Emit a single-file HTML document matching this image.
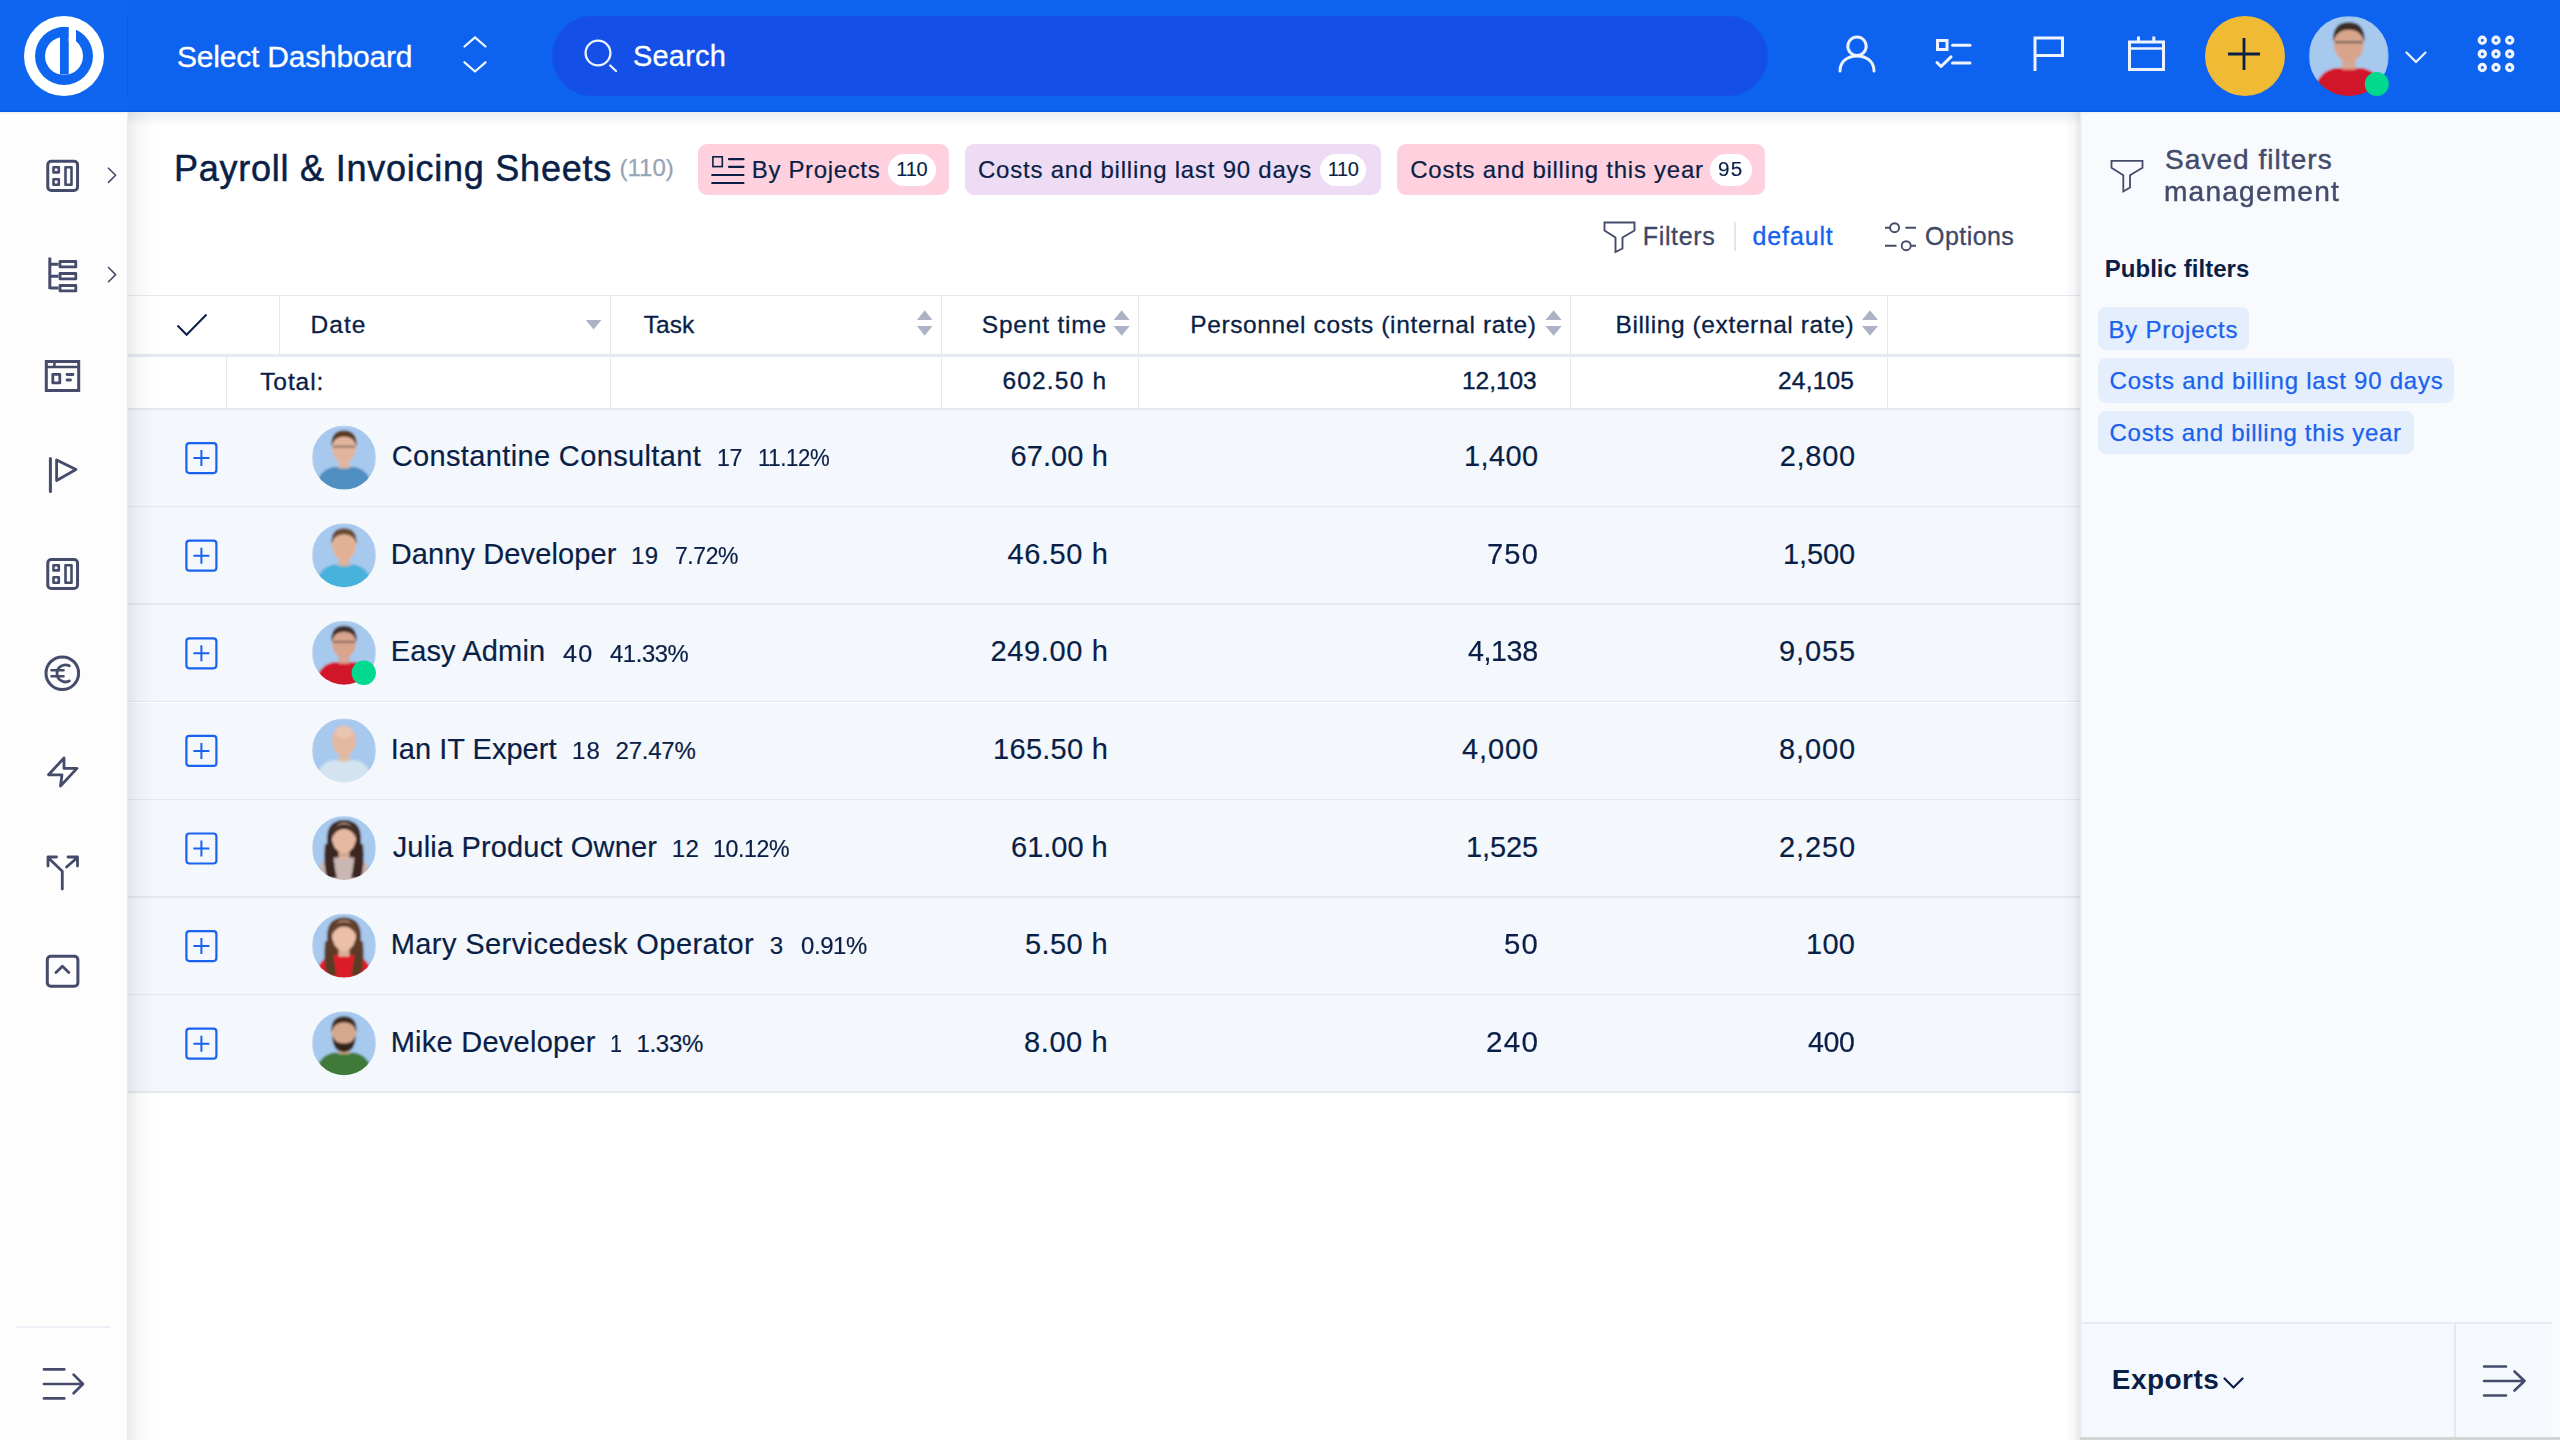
<!DOCTYPE html>
<html><head><meta charset="utf-8"><title>Payroll &amp; Invoicing Sheets</title>
<style>
*{margin:0;padding:0;box-sizing:border-box}
html,body{width:2560px;height:1440px;overflow:hidden;background:#fff;font-family:"Liberation Sans",sans-serif;color:#0a1f47}
.a{position:absolute}
.t{position:absolute;white-space:nowrap;line-height:1}
svg{position:absolute;overflow:visible}
</style></head>
<body>
<svg width="0" height="0" style="position:absolute"><defs><filter id="blur" x="-10%" y="-10%" width="120%" height="120%"><feGaussianBlur stdDeviation="0.8"/></filter></defs></svg>
<div class="a" style="left:0;top:0;width:2560px;height:112px;background:#0e66f0"></div>
<div class="a" style="left:128px;top:0;width:2432px;height:112px;background:#0d63ef"></div>
<div class="a" style="left:0;top:110px;width:2560px;height:2px;background:linear-gradient(#0c5eee,#0557e8)"></div>
<div class="a" style="left:128px;top:112px;width:1952px;height:14px;background:linear-gradient(#ebedf1,rgba(255,255,255,0))"></div>
<div class="a" style="left:0;top:112px;width:127px;height:1328px;background:#fdfdfe"></div>
<div class="a" style="left:127px;top:112px;width:1px;height:1328px;background:#e6eaf2"></div>
<div class="a" style="left:0;top:112px;width:128px;height:3px;background:linear-gradient(#eceef2,rgba(255,255,255,0))"></div>
<div class="a" style="left:2080px;top:112px;width:480px;height:1328px;background:#f9fafe"></div>
<div class="a" style="left:2080px;top:112px;width:2px;height:1328px;background:linear-gradient(90deg,#e6e9f3,#f3f5fc)"></div>
<div class="a" style="left:2080px;top:112px;width:480px;height:3px;background:linear-gradient(#eceef3,rgba(249,250,254,0))"></div>
<svg style="left:0;top:0" width="128" height="112" viewBox="0 0 128 112">
<circle cx="64" cy="56" r="40" fill="#fff"/>
<circle cx="64" cy="56" r="29" fill="#0e66f0"/>
<circle cx="64" cy="56" r="19" fill="#fff"/>
<rect x="60" y="27" width="8.75" height="47.5" fill="#0e66f0"/>
<rect x="68.75" y="20" width="7.25" height="22" fill="#fff"/>
</svg>
<div class="a" style="left:127px;top:16px;width:1px;height:80px;background:#1a55e0"></div>
<div class="t" style="left:177.00px;top:41.60px;font-size:30px;color:#fff;font-weight:400;letter-spacing:-0.200px;-webkit-text-stroke:0.3px #fff;">Select Dashboard</div>
<svg style="left:0;top:0" width="600" height="112">
<path d="M464.5 46.5 L475 37.3 L485.5 46.5 M464.5 62.3 L475 71.5 L485.5 62.3" fill="none" stroke="#eef3fd" stroke-width="2.3" stroke-linecap="round" stroke-linejoin="round"/>
</svg>
<div class="a" style="left:552px;top:16px;width:1216px;height:80px;border-radius:40px;background:#1450e8"></div>
<svg style="left:0;top:0" width="700" height="112">
<circle cx="598" cy="53" r="12.4" fill="none" stroke="#eef3fd" stroke-width="2.3"/>
<path d="M610.2 65.5 L616 71" stroke="#eef3fd" stroke-width="2.3" stroke-linecap="round"/>
</svg>
<div class="t" style="left:633.00px;top:42.45px;font-size:29px;color:#fff;font-weight:400;letter-spacing:0.200px;-webkit-text-stroke:0.3px #fff;">Search</div>
<svg style="left:0;top:0" width="2560" height="112">
<g fill="none" stroke="#eef3fd" stroke-width="3" stroke-linecap="round" stroke-linejoin="round">
<circle cx="1857" cy="46.3" r="9.2"/>
<path d="M1840 71 C1840 61.5 1847.5 56 1857 56 C1866.5 56 1874 61.5 1874 71"/>
<rect x="1937.5" y="40.5" width="9.5" height="9" stroke-linecap="butt" stroke-linejoin="miter"/>
<path d="M1952.5 45.3 H1970"/>
<path d="M1937 62.5 L1941 66.5 L1951 56.8"/>
<path d="M1952.5 63 H1970"/>
<path d="M2035 71 V38 H2062.5 V55.5 H2035" stroke-linecap="butt" stroke-linejoin="miter"/>
<rect x="2129.5" y="42" width="34" height="27.5" stroke-linejoin="miter"/>
<path d="M2129.5 48.5 H2163.5" stroke-width="2.6"/>
<path d="M2138.5 36.5 V42 M2153.8 36.5 V42" stroke-linecap="butt"/>
</g>
<circle cx="2245" cy="56" r="40" fill="#f1ba35"/>
<path d="M2228 54 H2260 M2244 38 V70" stroke="#0a1f47" stroke-width="2.8"/>
<path d="M2406.5 52.5 L2416 62 L2425.5 52.5" fill="none" stroke="#eef3fd" stroke-width="2.2" stroke-linecap="round" stroke-linejoin="round"/>
<g fill="none" stroke="#eef3fd" stroke-width="3.2">
<circle cx="2482.3" cy="40.3" r="3.1"/><circle cx="2496" cy="40.3" r="3.1"/><circle cx="2509.7" cy="40.3" r="3.1"/>
<circle cx="2482.3" cy="53.9" r="3.1"/><circle cx="2496" cy="53.9" r="3.1"/><circle cx="2509.7" cy="53.9" r="3.1"/>
<circle cx="2482.3" cy="67.5" r="3.1"/><circle cx="2496" cy="67.5" r="3.1"/><circle cx="2509.7" cy="67.5" r="3.1"/>
</g>
</svg>
<svg style="left:0;top:0" width="2560" height="112"><g transform="translate(2308.80 16.00) scale(1.2500)"><clipPath id="c23488_560"><circle cx="32" cy="32" r="32"/></clipPath><g clip-path="url(#c23488_560)" filter="url(#blur)"><rect width="64" height="64" fill="#a7c9ee"/><path d="M3 66 Q5 45 21 41.5 L43 41.5 Q59 45 61 66 Z" fill="#d2162b"/><rect x="26.5" y="30" width="11" height="13" fill="#d9a48c" opacity="0.9"/><ellipse cx="32" cy="22" rx="12" ry="15" fill="#d9a48c"/><path d="M19.5 21 Q18.5 5 32 5 Q45.5 5 44.5 21 Q42 11 32 11 Q22 11 19.5 21 Z" fill="#3b2d26"/><path d="M21 21 H43" stroke="#3a3a3a" stroke-width="1.6" opacity="0.7"/></g></g><circle cx="2376.8" cy="84" r="12" fill="#00d98e"/></svg>
<svg style="left:0;top:0" width="128" height="1440">
<g fill="none" stroke="#454c6b" stroke-width="3" stroke-linecap="round" stroke-linejoin="round">
<rect x="47.75" y="161.3" width="29.8" height="29.2" rx="3.5"/>
<rect x="53.5" y="167.3" width="5.3" height="5.1" stroke-width="2.6"/>
<rect x="53.5" y="179.3" width="5.3" height="5.4" stroke-width="2.6"/>
<rect x="65.5" y="167.3" width="6" height="17.4" stroke-width="2.6"/>
<path d="M108.5 168.2 L115.6 175.3 L108.5 182.4" stroke-width="1.6"/>

<path d="M49.8 257.5 V289" stroke-linecap="butt"/>
<path d="M49.8 264.2 H58.5 M49.8 276.2 H58.5 M49.8 288 H58.5" stroke-linecap="butt"/>
<rect x="60" y="261.5" width="15.8" height="5.4" stroke-width="2.8"/>
<rect x="60" y="273.5" width="15.8" height="5.4" stroke-width="2.8"/>
<rect x="60" y="285.5" width="15.8" height="5.4" stroke-width="2.8"/>
<path d="M108.5 267.5 L115.6 274.6 L108.5 281.7" stroke-width="1.6"/>

<rect x="46.3" y="361.5" width="32.4" height="29" stroke-linejoin="miter"/>
<path d="M46.3 367 H78.7 M54.4 361.5 V367" stroke-width="2.6"/>
<rect x="52.8" y="374.3" width="7" height="8.6" stroke-width="2.8"/>
<path d="M67 374.5 H73 M67 380 H70.5" stroke-width="2.8"/>

<path d="M50.4 458.5 V491.5"/>
<path d="M56.6 460 L76 469.5 L56.6 480.5 Z" stroke-width="2.8"/>

<rect x="47.75" y="559.5" width="29.8" height="29" rx="3.5"/>
<rect x="53.5" y="565.3" width="5.3" height="5.1" stroke-width="2.6"/>
<rect x="53.5" y="577.3" width="5.3" height="5.4" stroke-width="2.6"/>
<rect x="65.5" y="565.3" width="6" height="17.4" stroke-width="2.6"/>

<circle cx="62.3" cy="673.2" r="16.3"/>
<path d="M69.3 665.8 A8.5 8.5 0 1 0 69.3 681" stroke-width="2.8"/>
<path d="M51.5 670.3 H63.5 M51.5 676.3 H63.5" stroke-width="2.6"/>

<path d="M64 758 L48.5 774.8 H62 L60.5 786 L77 768.4 H64 Z" stroke-width="2.8"/>

<path d="M62.3 889 V871.2 L48 857.5 M48 866 V857 H56.5 M66.5 867 L77.5 857.5 M68 857 H77.5 V866" stroke-width="2.8"/>

<rect x="47.3" y="956.3" width="30.6" height="30" rx="3.5"/>
<path d="M56 972.5 L62.4 966.2 L68.8 972.5" stroke-width="2.8"/>

<path d="M44 1369.4 H64.3 M44 1384 H82.5 M44 1398.4 H64.3 M73.6 1374.6 L83 1384 L73.6 1393.2" stroke-width="2.7"/>
</g>
<rect x="16" y="1326.5" width="94.5" height="1.2" fill="#e3e8f2"/>
</svg>
<div class="t" style="left:174.00px;top:150.53px;font-size:36px;color:#0a1f47;font-weight:400;letter-spacing:0.760px;-webkit-text-stroke:0.5px #0a1f47;">Payroll &amp; Invoicing Sheets</div>
<div class="t" style="left:619.50px;top:155.68px;font-size:24px;color:#97a3b6;font-weight:400;letter-spacing:0.000px;-webkit-text-stroke:0.25px #97a3b6;">(110)</div>
<div class="a" style="left:697.6px;top:144px;width:251.39999999999998px;height:51px;border-radius:9px;background:#ffd1df"></div>
<div class="a" style="left:888.3px;top:154px;width:47.5px;height:32px;border-radius:16px;background:#fff"></div>
<div class="t" style="left:751.80px;top:157.68px;font-size:24px;color:#0a1f47;font-weight:400;letter-spacing:0.650px;-webkit-text-stroke:0.2px #0a1f47;">By Projects</div>
<div class="t" style="left:896.30px;top:158.97px;font-size:20px;color:#0a1f47;font-weight:400;letter-spacing:-0.250px;-webkit-text-stroke:0.15px #0a1f47;">110</div>
<svg style="left:0;top:0" width="1000" height="220"><g fill="none" stroke="#0a1f47" stroke-width="2.2">
<rect x="712.9" y="156.8" width="9.4" height="9.8" stroke-width="1.6"/>
<path d="M729 159.2 H743.5 M729 166.8 H743.5 M712.2 175 H743.5 M712.2 183 H743.5" stroke-linecap="round"/>
</g></svg>
<div class="a" style="left:965px;top:144px;width:416px;height:51px;border-radius:9px;background:#eedcf4"></div>
<div class="a" style="left:1320px;top:154px;width:46px;height:32px;border-radius:16px;background:#fff"></div>
<div class="t" style="left:978.00px;top:157.68px;font-size:24px;color:#0a1f47;font-weight:400;letter-spacing:0.776px;-webkit-text-stroke:0.2px #0a1f47;">Costs and billing last 90 days</div>
<div class="t" style="left:1327.75px;top:158.97px;font-size:20px;color:#0a1f47;font-weight:400;letter-spacing:-0.375px;-webkit-text-stroke:0.15px #0a1f47;">110</div>
<div class="a" style="left:1397px;top:144px;width:368px;height:51px;border-radius:9px;background:#ffd1df"></div>
<div class="a" style="left:1710px;top:154px;width:42px;height:32px;border-radius:16px;background:#fff"></div>
<div class="t" style="left:1410.25px;top:157.68px;font-size:24px;color:#0a1f47;font-weight:400;letter-spacing:0.740px;-webkit-text-stroke:0.2px #0a1f47;">Costs and billing this year</div>
<div class="t" style="left:1718.46px;top:158.97px;font-size:20px;color:#0a1f47;font-weight:400;letter-spacing:1.200px;-webkit-text-stroke:0.15px #0a1f47;transform:scaleX(1.0360);transform-origin:0 0;">95</div>
<svg style="left:0;top:0" width="2100" height="300"><g fill="none" stroke="#454c6b" stroke-width="1.9" stroke-linejoin="miter">
<path d="M1604.5 222.5 H1634.5 V230.5 L1622.5 237.5 V248.5 L1615.5 252 V237.5 L1604.5 230.5 Z"/>
<circle cx="1894.6" cy="227.7" r="4.5"/><circle cx="1906.2" cy="245.7" r="4.5"/>
<path d="M1885 227.7 H1890 M1905.4 227.7 H1916 M1885 245.7 H1896.5 M1911 245.7 H1916"/>
</g></svg>
<div class="t" style="left:1642.70px;top:223.84px;font-size:25px;color:#3e4766;font-weight:400;letter-spacing:0.683px;-webkit-text-stroke:0.3px #3e4766;">Filters</div>
<div class="a" style="left:1733.5px;top:222px;width:2.5px;height:28.5px;background:#e3e7ee"></div>
<div class="t" style="left:1752.60px;top:223.84px;font-size:25px;color:#1661f0;font-weight:400;letter-spacing:0.850px;-webkit-text-stroke:0.3px #1661f0;">default</div>
<div class="t" style="left:1925.00px;top:223.84px;font-size:25px;color:#3e4766;font-weight:400;letter-spacing:0.450px;-webkit-text-stroke:0.3px #3e4766;">Options</div>
<div class="a" style="left:128px;top:295px;width:1952px;height:1px;background:#e3e8f1"></div>
<div class="a" style="left:128px;top:354px;width:1952px;height:3px;background:#e4e9f3"></div>
<div class="a" style="left:128px;top:408px;width:1952px;height:2px;background:#e3e8f1"></div>
<div class="a" style="left:279px;top:296px;width:1px;height:58px;background:#e3e8f1"></div>
<div class="a" style="left:610px;top:296px;width:1px;height:58px;background:#e3e8f1"></div>
<div class="a" style="left:941px;top:296px;width:1px;height:58px;background:#e3e8f1"></div>
<div class="a" style="left:1138px;top:296px;width:1px;height:58px;background:#e3e8f1"></div>
<div class="a" style="left:1570px;top:296px;width:1px;height:58px;background:#e3e8f1"></div>
<div class="a" style="left:1887px;top:296px;width:1px;height:58px;background:#e3e8f1"></div>
<div class="a" style="left:226px;top:357px;width:1px;height:51px;background:#e3e8f1"></div>
<div class="a" style="left:610px;top:357px;width:1px;height:51px;background:#e3e8f1"></div>
<div class="a" style="left:941px;top:357px;width:1px;height:51px;background:#e3e8f1"></div>
<div class="a" style="left:1138px;top:357px;width:1px;height:51px;background:#e3e8f1"></div>
<div class="a" style="left:1570px;top:357px;width:1px;height:51px;background:#e3e8f1"></div>
<div class="a" style="left:1887px;top:357px;width:1px;height:51px;background:#e3e8f1"></div>
<div class="t" style="left:310.60px;top:313.46px;font-size:24.5px;color:#0a1f47;font-weight:400;letter-spacing:1.000px;-webkit-text-stroke:0.3px #0a1f47;">Date</div>
<div class="t" style="left:643.75px;top:313.46px;font-size:24.5px;color:#0a1f47;font-weight:400;letter-spacing:0.000px;-webkit-text-stroke:0.3px #0a1f47;">Task</div>
<div class="t" style="left:981.80px;top:313.46px;font-size:24.5px;color:#0a1f47;font-weight:400;letter-spacing:0.800px;-webkit-text-stroke:0.3px #0a1f47;">Spent time</div>
<div class="t" style="left:1190.20px;top:313.46px;font-size:24.5px;color:#0a1f47;font-weight:400;letter-spacing:0.627px;-webkit-text-stroke:0.3px #0a1f47;">Personnel costs (internal rate)</div>
<div class="t" style="left:1615.50px;top:313.46px;font-size:24.5px;color:#0a1f47;font-weight:400;letter-spacing:0.614px;-webkit-text-stroke:0.3px #0a1f47;">Billing (external rate)</div>
<svg style="left:0;top:0" width="2100" height="400">
<path d="M177.5 325.5 L186.6 334.8 L206.5 314.5" fill="none" stroke="#0a1f47" stroke-width="2"/>
<g fill="#abb3c4">
<path d="M585.8 320 H601.4 L593.6 329.5 Z"/>
<path d="M916.9 320 H932.5 L924.7 310.3 Z M916.9 326 H932.5 L924.7 335.8 Z"/>
<path d="M1113.6 320 H1129.7 L1121.65 310.3 Z M1113.6 326 H1129.7 L1121.65 335.8 Z"/>
<path d="M1545.5 320 H1561.7 L1553.6 310.3 Z M1545.5 326 H1561.7 L1553.6 335.8 Z"/>
<path d="M1862 320 H1878 L1870 310.3 Z M1862 326 H1878 L1870 335.8 Z"/>
</g></svg>
<div class="t" style="left:260.20px;top:369.56px;font-size:24.5px;color:#0a1f47;font-weight:400;letter-spacing:0.910px;-webkit-text-stroke:0.35px #0a1f47;">Total:</div>
<div class="t" style="left:1002.40px;top:369.26px;font-size:24.5px;color:#0a1f47;font-weight:400;letter-spacing:1.186px;-webkit-text-stroke:0.35px #0a1f47;">602.50 h</div>
<div class="t" style="left:1462.00px;top:369.26px;font-size:24.5px;color:#0a1f47;font-weight:400;letter-spacing:-0.050px;-webkit-text-stroke:0.35px #0a1f47;">12,103</div>
<div class="t" style="left:1778.00px;top:369.26px;font-size:24.5px;color:#0a1f47;font-weight:400;letter-spacing:0.200px;-webkit-text-stroke:0.35px #0a1f47;">24,105</div>
<div class="a" style="left:128px;top:409.70px;width:1952px;height:97.60px;background:#f4f8fd"></div>
<div class="a" style="left:128px;top:505.70px;width:1952px;height:1.6px;background:#e3e8f1"></div>
<div class="t" style="left:391.70px;top:442.25px;font-size:29px;color:#0a1f47;font-weight:400;letter-spacing:0.362px;-webkit-text-stroke:0.2px #0a1f47;">Constantine Consultant</div>
<div class="t" style="left:716.97px;top:446.48px;font-size:24px;color:#0a1f47;font-weight:400;letter-spacing:-0.400px;-webkit-text-stroke:0.2px #0a1f47;transform:scaleX(0.9661);transform-origin:0 0;">17</div>
<div class="t" style="left:758.05px;top:446.48px;font-size:24px;color:#0a1f47;font-weight:400;letter-spacing:-0.400px;-webkit-text-stroke:0.2px #0a1f47;transform:scaleX(0.9240);transform-origin:0 0;">11.12%</div>
<div class="t" style="left:1010.50px;top:442.25px;font-size:29px;color:#0a1f47;font-weight:400;letter-spacing:0.083px;-webkit-text-stroke:0.2px #0a1f47;">67.00 h</div>
<div class="t" style="left:1464.00px;top:442.25px;font-size:29px;color:#0a1f47;font-weight:400;letter-spacing:0.375px;-webkit-text-stroke:0.2px #0a1f47;">1,400</div>
<div class="t" style="left:1779.75px;top:442.25px;font-size:29px;color:#0a1f47;font-weight:400;letter-spacing:0.688px;-webkit-text-stroke:0.2px #0a1f47;">2,800</div>
<div class="a" style="left:128px;top:507.30px;width:1952px;height:97.60px;background:#f4f8fd"></div>
<div class="a" style="left:128px;top:603.30px;width:1952px;height:1.6px;background:#e3e8f1"></div>
<div class="t" style="left:390.70px;top:539.85px;font-size:29px;color:#0a1f47;font-weight:400;letter-spacing:0.114px;-webkit-text-stroke:0.2px #0a1f47;">Danny Developer</div>
<div class="t" style="left:630.90px;top:544.08px;font-size:24px;color:#0a1f47;font-weight:400;letter-spacing:0.400px;-webkit-text-stroke:0.2px #0a1f47;">19</div>
<div class="t" style="left:674.94px;top:544.08px;font-size:24px;color:#0a1f47;font-weight:400;letter-spacing:-0.400px;-webkit-text-stroke:0.2px #0a1f47;transform:scaleX(0.9557);transform-origin:0 0;">7.72%</div>
<div class="t" style="left:1007.50px;top:539.85px;font-size:29px;color:#0a1f47;font-weight:400;letter-spacing:0.583px;-webkit-text-stroke:0.2px #0a1f47;">46.50 h</div>
<div class="t" style="left:1487.00px;top:539.85px;font-size:29px;color:#0a1f47;font-weight:400;letter-spacing:1.200px;-webkit-text-stroke:0.2px #0a1f47;transform:scaleX(1.0020);transform-origin:0 0;">750</div>
<div class="t" style="left:1783.00px;top:539.85px;font-size:29px;color:#0a1f47;font-weight:400;letter-spacing:-0.125px;-webkit-text-stroke:0.2px #0a1f47;">1,500</div>
<div class="a" style="left:128px;top:604.90px;width:1952px;height:97.60px;background:#f4f8fd"></div>
<div class="a" style="left:128px;top:700.90px;width:1952px;height:1.6px;background:#e3e8f1"></div>
<div class="t" style="left:390.70px;top:637.45px;font-size:29px;color:#0a1f47;font-weight:400;letter-spacing:0.144px;-webkit-text-stroke:0.2px #0a1f47;">Easy Admin</div>
<div class="t" style="left:562.60px;top:641.68px;font-size:24px;color:#0a1f47;font-weight:400;letter-spacing:1.200px;-webkit-text-stroke:0.2px #0a1f47;transform:scaleX(1.0515);transform-origin:0 0;">40</div>
<div class="t" style="left:609.70px;top:641.68px;font-size:24px;color:#0a1f47;font-weight:400;letter-spacing:-0.400px;-webkit-text-stroke:0.2px #0a1f47;transform:scaleX(0.9924);transform-origin:0 0;">41.33%</div>
<div class="t" style="left:990.50px;top:637.45px;font-size:29px;color:#0a1f47;font-weight:400;letter-spacing:0.643px;-webkit-text-stroke:0.2px #0a1f47;">249.00 h</div>
<div class="t" style="left:1468.00px;top:637.45px;font-size:29px;color:#0a1f47;font-weight:400;letter-spacing:-0.400px;-webkit-text-stroke:0.2px #0a1f47;transform:scaleX(0.9872);transform-origin:0 0;">4,138</div>
<div class="t" style="left:1779.00px;top:637.45px;font-size:29px;color:#0a1f47;font-weight:400;letter-spacing:0.875px;-webkit-text-stroke:0.2px #0a1f47;">9,055</div>
<div class="a" style="left:128px;top:702.50px;width:1952px;height:97.60px;background:#f4f8fd"></div>
<div class="a" style="left:128px;top:798.50px;width:1952px;height:1.6px;background:#e3e8f1"></div>
<div class="t" style="left:390.70px;top:735.05px;font-size:29px;color:#0a1f47;font-weight:400;letter-spacing:0.025px;-webkit-text-stroke:0.2px #0a1f47;">Ian IT Expert</div>
<div class="t" style="left:571.89px;top:739.28px;font-size:24px;color:#0a1f47;font-weight:400;letter-spacing:1.200px;-webkit-text-stroke:0.2px #0a1f47;transform:scaleX(1.0040);transform-origin:0 0;">18</div>
<div class="t" style="left:615.60px;top:739.28px;font-size:24px;color:#0a1f47;font-weight:400;letter-spacing:-0.240px;-webkit-text-stroke:0.2px #0a1f47;">27.47%</div>
<div class="t" style="left:993.10px;top:735.05px;font-size:29px;color:#0a1f47;font-weight:400;letter-spacing:0.271px;-webkit-text-stroke:0.2px #0a1f47;">165.50 h</div>
<div class="t" style="left:1462.00px;top:735.05px;font-size:29px;color:#0a1f47;font-weight:400;letter-spacing:0.875px;-webkit-text-stroke:0.2px #0a1f47;">4,000</div>
<div class="t" style="left:1779.00px;top:735.05px;font-size:29px;color:#0a1f47;font-weight:400;letter-spacing:0.875px;-webkit-text-stroke:0.2px #0a1f47;">8,000</div>
<div class="a" style="left:128px;top:800.10px;width:1952px;height:97.60px;background:#f4f8fd"></div>
<div class="a" style="left:128px;top:896.10px;width:1952px;height:1.6px;background:#e3e8f1"></div>
<div class="t" style="left:392.70px;top:832.65px;font-size:29px;color:#0a1f47;font-weight:400;letter-spacing:0.172px;-webkit-text-stroke:0.2px #0a1f47;">Julia Product Owner</div>
<div class="t" style="left:671.70px;top:836.88px;font-size:24px;color:#0a1f47;font-weight:400;letter-spacing:0.500px;-webkit-text-stroke:0.2px #0a1f47;">12</div>
<div class="t" style="left:713.37px;top:836.88px;font-size:24px;color:#0a1f47;font-weight:400;letter-spacing:-0.400px;-webkit-text-stroke:0.2px #0a1f47;transform:scaleX(0.9649);transform-origin:0 0;">10.12%</div>
<div class="t" style="left:1011.10px;top:832.65px;font-size:29px;color:#0a1f47;font-weight:400;letter-spacing:-0.017px;-webkit-text-stroke:0.2px #0a1f47;">61.00 h</div>
<div class="t" style="left:1466.00px;top:832.65px;font-size:29px;color:#0a1f47;font-weight:400;letter-spacing:-0.125px;-webkit-text-stroke:0.2px #0a1f47;">1,525</div>
<div class="t" style="left:1779.00px;top:832.65px;font-size:29px;color:#0a1f47;font-weight:400;letter-spacing:0.875px;-webkit-text-stroke:0.2px #0a1f47;">2,250</div>
<div class="a" style="left:128px;top:897.70px;width:1952px;height:97.60px;background:#f4f8fd"></div>
<div class="a" style="left:128px;top:993.70px;width:1952px;height:1.6px;background:#e3e8f1"></div>
<div class="t" style="left:390.70px;top:930.25px;font-size:29px;color:#0a1f47;font-weight:400;letter-spacing:0.421px;-webkit-text-stroke:0.2px #0a1f47;">Mary Servicedesk Operator</div>
<div class="t" style="left:769.70px;top:934.48px;font-size:24px;color:#0a1f47;font-weight:400;letter-spacing:0.700px;-webkit-text-stroke:0.2px #0a1f47;">3</div>
<div class="t" style="left:800.70px;top:934.48px;font-size:24px;color:#0a1f47;font-weight:400;letter-spacing:-0.400px;-webkit-text-stroke:0.2px #0a1f47;transform:scaleX(0.9969);transform-origin:0 0;">0.91%</div>
<div class="t" style="left:1024.90px;top:930.25px;font-size:29px;color:#0a1f47;font-weight:400;letter-spacing:0.420px;-webkit-text-stroke:0.2px #0a1f47;">5.50 h</div>
<div class="t" style="left:1503.99px;top:930.25px;font-size:29px;color:#0a1f47;font-weight:400;letter-spacing:1.200px;-webkit-text-stroke:0.2px #0a1f47;transform:scaleX(1.0093);transform-origin:0 0;">50</div>
<div class="t" style="left:1806.00px;top:930.25px;font-size:29px;color:#0a1f47;font-weight:400;letter-spacing:0.250px;-webkit-text-stroke:0.2px #0a1f47;">100</div>
<div class="a" style="left:128px;top:995.30px;width:1952px;height:97.60px;background:#f4f8fd"></div>
<div class="a" style="left:128px;top:1091.30px;width:1952px;height:1.6px;background:#e3e8f1"></div>
<div class="t" style="left:390.70px;top:1027.85px;font-size:29px;color:#0a1f47;font-weight:400;letter-spacing:0.254px;-webkit-text-stroke:0.2px #0a1f47;">Mike Developer</div>
<div class="t" style="left:610.00px;top:1032.08px;font-size:24px;color:#0a1f47;font-weight:400;letter-spacing:-0.400px;-webkit-text-stroke:0.2px #0a1f47;transform:scaleX(0.9000);transform-origin:0 0;">1</div>
<div class="t" style="left:636.50px;top:1032.08px;font-size:24px;color:#0a1f47;font-weight:400;letter-spacing:-0.325px;-webkit-text-stroke:0.2px #0a1f47;">1.33%</div>
<div class="t" style="left:1024.00px;top:1027.85px;font-size:29px;color:#0a1f47;font-weight:400;letter-spacing:0.600px;-webkit-text-stroke:0.2px #0a1f47;">8.00 h</div>
<div class="t" style="left:1485.98px;top:1027.85px;font-size:29px;color:#0a1f47;font-weight:400;letter-spacing:1.200px;-webkit-text-stroke:0.2px #0a1f47;transform:scaleX(1.0223);transform-origin:0 0;">240</div>
<div class="t" style="left:1808.00px;top:1027.85px;font-size:29px;color:#0a1f47;font-weight:400;letter-spacing:-0.400px;-webkit-text-stroke:0.2px #0a1f47;transform:scaleX(0.9852);transform-origin:0 0;">400</div>
<svg style="left:0;top:0" width="2100" height="1440"><g transform="translate(312.00 425.60) scale(1.0000)"><clipPath id="c3440_4576"><circle cx="32" cy="32" r="32"/></clipPath><g clip-path="url(#c3440_4576)" filter="url(#blur)"><rect width="64" height="64" fill="#a7c9ee"/><path d="M3 66 Q5 45 21 41.5 L43 41.5 Q59 45 61 66 Z" fill="#4f8fc2"/><rect x="26.5" y="30" width="11" height="13" fill="#e3b49c" opacity="0.9"/><ellipse cx="32" cy="22" rx="12" ry="15" fill="#e3b49c"/><path d="M19.5 21 Q18.5 5 32 5 Q45.5 5 44.5 21 Q42 11 32 11 Q22 11 19.5 21 Z" fill="#5a3b22"/><path d="M21 21 H43" stroke="#3a3a3a" stroke-width="1.6" opacity="0.7"/></g></g><rect x="186.4" y="443.1" width="30" height="30" rx="3" fill="none" stroke="#1a62f0" stroke-width="2.2"/><path d="M201.4 450.1 V466.1 M193.4 458.1 H209.4" stroke="#1a62f0" stroke-width="2"/><g transform="translate(312.00 523.20) scale(1.0000)"><clipPath id="c3440_5552"><circle cx="32" cy="32" r="32"/></clipPath><g clip-path="url(#c3440_5552)" filter="url(#blur)"><rect width="64" height="64" fill="#a7c9ee"/><path d="M3 66 Q5 45 21 41.5 L43 41.5 Q59 45 61 66 Z" fill="#47b3dd"/><rect x="26.5" y="30" width="11" height="13" fill="#e2b195" opacity="0.9"/><ellipse cx="32" cy="22" rx="12" ry="15" fill="#e2b195"/><path d="M19.5 21 Q18.5 5 32 5 Q45.5 5 44.5 21 Q42 11 32 11 Q22 11 19.5 21 Z" fill="#6b4a33"/></g></g><rect x="186.4" y="540.7" width="30" height="30" rx="3" fill="none" stroke="#1a62f0" stroke-width="2.2"/><path d="M201.4 547.7 V563.7 M193.4 555.7 H209.4" stroke="#1a62f0" stroke-width="2"/><g transform="translate(312.00 620.80) scale(1.0000)"><clipPath id="c3440_6528"><circle cx="32" cy="32" r="32"/></clipPath><g clip-path="url(#c3440_6528)" filter="url(#blur)"><rect width="64" height="64" fill="#a7c9ee"/><path d="M3 66 Q5 45 21 41.5 L43 41.5 Q59 45 61 66 Z" fill="#d2162b"/><rect x="26.5" y="30" width="11" height="13" fill="#d9a48c" opacity="0.9"/><ellipse cx="32" cy="22" rx="12" ry="15" fill="#d9a48c"/><path d="M19.5 21 Q18.5 5 32 5 Q45.5 5 44.5 21 Q42 11 32 11 Q22 11 19.5 21 Z" fill="#3b2d26"/><path d="M21 21 H43" stroke="#3a3a3a" stroke-width="1.6" opacity="0.7"/></g></g><circle cx="363.75" cy="672.8" r="12.2" fill="#00d98e"/><rect x="186.4" y="638.3" width="30" height="30" rx="3" fill="none" stroke="#1a62f0" stroke-width="2.2"/><path d="M201.4 645.3 V661.3 M193.4 653.3 H209.4" stroke="#1a62f0" stroke-width="2"/><g transform="translate(312.00 718.40) scale(1.0000)"><clipPath id="c3440_7504"><circle cx="32" cy="32" r="32"/></clipPath><g clip-path="url(#c3440_7504)" filter="url(#blur)"><rect width="64" height="64" fill="#a7c9ee"/><path d="M3 66 Q5 45 21 41.5 L43 41.5 Q59 45 61 66 Z" fill="#d3e3f0"/><rect x="26.5" y="30" width="11" height="13" fill="#e4b8a0" opacity="0.9"/><ellipse cx="32" cy="22" rx="12" ry="15" fill="#e4b8a0"/><ellipse cx="32" cy="14" rx="9" ry="6" fill="#efcdb9" opacity="0.6"/></g></g><rect x="186.4" y="735.9" width="30" height="30" rx="3" fill="none" stroke="#1a62f0" stroke-width="2.2"/><path d="M201.4 742.9 V758.9 M193.4 750.9 H209.4" stroke="#1a62f0" stroke-width="2"/><g transform="translate(312.00 816.00) scale(1.0000)"><clipPath id="c3440_8480"><circle cx="32" cy="32" r="32"/></clipPath><g clip-path="url(#c3440_8480)" filter="url(#blur)"><rect width="64" height="64" fill="#a7c9ee"/><path d="M15 26 Q14 4 32 4 Q50 4 49 26 L52 54 Q44 60 32 58 Q20 60 12 54 Z" fill="#3a2620"/><path d="M3 66 Q5 45 21 41.5 L43 41.5 Q59 45 61 66 Z" fill="#c9b6b2"/><rect x="26.5" y="30" width="11" height="13" fill="#e7b9a2" opacity="0.9"/><ellipse cx="32" cy="22" rx="12" ry="15" fill="#e7b9a2"/><path d="M20 22 Q21 8 32 8 Q43 8 44 22 Q40 13 32 13 Q24 13 20 22Z" fill="#3a2620"/><path d="M13 28 Q11 48 15 62 L25 62 Q21 46 21.5 28 Z M51 28 Q53 48 49 62 L39 62 Q43 46 42.5 28 Z" fill="#3a2620"/></g></g><rect x="186.4" y="833.5" width="30" height="30" rx="3" fill="none" stroke="#1a62f0" stroke-width="2.2"/><path d="M201.4 840.5 V856.5 M193.4 848.5 H209.4" stroke="#1a62f0" stroke-width="2"/><g transform="translate(312.00 913.60) scale(1.0000)"><clipPath id="c3440_9456"><circle cx="32" cy="32" r="32"/></clipPath><g clip-path="url(#c3440_9456)" filter="url(#blur)"><rect width="64" height="64" fill="#a7c9ee"/><path d="M15 26 Q14 4 32 4 Q50 4 49 26 L52 54 Q44 60 32 58 Q20 60 12 54 Z" fill="#5b3a25"/><path d="M3 66 Q5 45 21 41.5 L43 41.5 Q59 45 61 66 Z" fill="#dd1a2c"/><rect x="26.5" y="30" width="11" height="13" fill="#ebbfa8" opacity="0.9"/><ellipse cx="32" cy="22" rx="12" ry="15" fill="#ebbfa8"/><path d="M20 22 Q21 8 32 8 Q43 8 44 22 Q40 13 32 13 Q24 13 20 22Z" fill="#5b3a25"/><path d="M13 28 Q11 48 15 62 L25 62 Q21 46 21.5 28 Z M51 28 Q53 48 49 62 L39 62 Q43 46 42.5 28 Z" fill="#5b3a25"/></g></g><rect x="186.4" y="931.1" width="30" height="30" rx="3" fill="none" stroke="#1a62f0" stroke-width="2.2"/><path d="M201.4 938.1 V954.1 M193.4 946.1 H209.4" stroke="#1a62f0" stroke-width="2"/><g transform="translate(312.00 1011.20) scale(1.0000)"><clipPath id="c3440_10431"><circle cx="32" cy="32" r="32"/></clipPath><g clip-path="url(#c3440_10431)" filter="url(#blur)"><rect width="64" height="64" fill="#a7c9ee"/><path d="M3 66 Q5 45 21 41.5 L43 41.5 Q59 45 61 66 Z" fill="#3f7a3a"/><rect x="26.5" y="30" width="11" height="13" fill="#d6a88d" opacity="0.9"/><ellipse cx="32" cy="22" rx="12" ry="15" fill="#d6a88d"/><path d="M19.5 21 Q18.5 5 32 5 Q45.5 5 44.5 21 Q42 11 32 11 Q22 11 19.5 21 Z" fill="#3d2b1f"/><path d="M20.5 24 Q20 40 32 41 Q44 40 43.5 24 Q41 33 32 32 Q23 33 20.5 24Z" fill="#35261c"/></g></g><rect x="186.4" y="1028.7" width="30" height="30" rx="3" fill="none" stroke="#1a62f0" stroke-width="2.2"/><path d="M201.4 1035.7 V1051.7 M193.4 1043.7 H209.4" stroke="#1a62f0" stroke-width="2"/></svg>
<div class="a" style="left:128px;top:112px;width:28px;height:1328px;background:linear-gradient(90deg,rgba(30,30,40,0.085),rgba(30,30,40,0.03) 40%,rgba(30,30,40,0))"></div>
<div class="a" style="left:2064px;top:112px;width:16px;height:1328px;background:linear-gradient(90deg,rgba(20,30,60,0),rgba(20,30,60,0.03) 60%,rgba(20,30,60,0.1))"></div>
<svg style="left:0;top:0" width="2560" height="1440"><g fill="none" stroke="#454c6b" stroke-width="1.8" stroke-linejoin="miter">
<path d="M2111.5 160.8 H2142.5 V167.8 L2130 175.2 V187.6 L2123.3 191.5 V175.2 L2111.5 167.8 Z"/>
</g></svg>
<div class="t" style="left:2165.10px;top:146.10px;font-size:28px;color:#434b6a;font-weight:400;letter-spacing:1.042px;-webkit-text-stroke:0.45px #434b6a;">Saved filters</div>
<div class="t" style="left:2163.99px;top:178.30px;font-size:28px;color:#434b6a;font-weight:400;letter-spacing:1.200px;-webkit-text-stroke:0.45px #434b6a;transform:scaleX(1.0035);transform-origin:0 0;">management</div>
<div class="t" style="left:2104.70px;top:256.68px;font-size:24px;color:#0a1f47;font-weight:700;letter-spacing:0.046px;">Public filters</div>
<div class="a" style="left:2097.7px;top:307.2px;width:151.7px;height:42.80000000000001px;border-radius:8px;background:#e4eefc"></div>
<div class="t" style="left:2108.60px;top:317.78px;font-size:24px;color:#1a62ee;font-weight:400;letter-spacing:0.750px;-webkit-text-stroke:0.25px #1a62ee;">By Projects</div>
<div class="a" style="left:2097.7px;top:358.3px;width:356.3px;height:44.5px;border-radius:8px;background:#e4eefc"></div>
<div class="t" style="left:2109.60px;top:368.58px;font-size:24px;color:#1a62ee;font-weight:400;letter-spacing:0.769px;-webkit-text-stroke:0.25px #1a62ee;">Costs and billing last 90 days</div>
<div class="a" style="left:2097.7px;top:411.1px;width:316.3px;height:42.799999999999955px;border-radius:8px;background:#e4eefc"></div>
<div class="t" style="left:2109.60px;top:421.38px;font-size:24px;color:#1a62ee;font-weight:400;letter-spacing:0.692px;-webkit-text-stroke:0.25px #1a62ee;">Costs and billing this year</div>
<div class="a" style="left:2082px;top:1323px;width:470px;height:114px;background:#f5f9fd"></div>
<div class="a" style="left:2082px;top:1322px;width:470px;height:2px;background:#e6ebf4"></div>
<div class="a" style="left:2454px;top:1324px;width:1.5px;height:113px;background:#e3e8f2"></div>
<div class="a" style="left:2080px;top:1437px;width:480px;height:3px;background:#d4d4d6"></div>
<div class="t" style="left:2111.75px;top:1365.80px;font-size:28px;color:#0a1f47;font-weight:700;letter-spacing:0.458px;">Exports</div>
<svg style="left:0;top:0" width="2560" height="1440"><g fill="none" stroke="#0a1f47" stroke-width="2.2" stroke-linecap="round" stroke-linejoin="round">
<path d="M2224.5 1378.5 L2233.5 1387.5 L2242.5 1378.5"/></g>
<g fill="none" stroke="#454c6b" stroke-width="2.6" stroke-linecap="round" stroke-linejoin="round">
<path d="M2484 1366.5 H2506 M2484 1395.5 H2506 M2484 1381 H2524.5 M2514.5 1371.5 L2524.5 1381 L2514.5 1390.5"/>
</g></svg>
</body></html>
